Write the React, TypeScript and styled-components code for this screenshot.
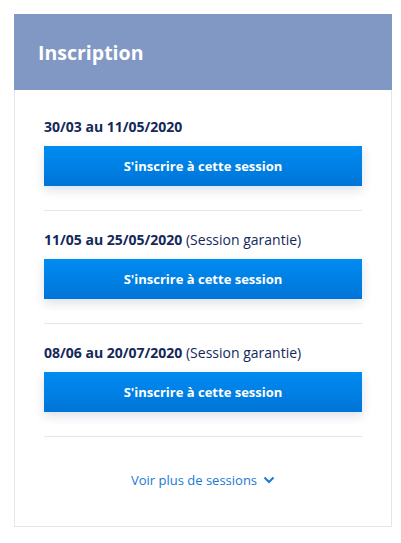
import React from 'react';
import styled, {createGlobalStyle} from 'styled-components';

const GlobalStyle = createGlobalStyle`
  body {
    margin: 0;
    background: #fff;
    font-family: "Open Sans", Lato, sans-serif;
  }
`;

const Page = styled.div`
  padding: 14px;
`;

const Card = styled.section`
  width: 378px;
  box-sizing: border-box;
`;

const Header = styled.header`
  height: 76px;
  background: #8198c4;
  display: flex;
  align-items: center;
  padding-left: 24px;
`;

const Title = styled.h2`
  margin: 0;
  color: #fff;
  font-size: 19.5px;
  font-weight: 700;
`;

const Body = styled.div`
  border: 1px solid #e3e7ea;
  border-top: none;
  padding: 8px 29px 0;
`;

const Session = styled.div`
  padding: 19px 0 24px;
  border-bottom: 1px solid #e3e7ea;
  display: flex;
  flex-direction: column;
  gap: 9px;
`;

const Dates = styled.div`
  font-size: 14px;
  line-height: 20px;
  color: #15285a;
  font-weight: 700;
`;

const Note = styled.span`
  font-weight: 400;
`;

const Button = styled.button`
  height: 40px;
  border: none;
  background: linear-gradient(to bottom, #008cf2, #0074d7);
  color: #fff;
  font-family: inherit;
  font-size: 13px;
  font-weight: 700;
  box-shadow: 0 4px 10px rgba(0, 40, 90, 0.15);
  cursor: pointer;
`;

const Footer = styled.div`
  padding: 33px 0 36px;
  display: flex;
  justify-content: center;
`;

const MoreLink = styled.a`
  display: flex;
  align-items: center;
  gap: 6px;
  font-size: 13px;
  line-height: 20px;
  color: #1a78d6;
  text-decoration: none;
  cursor: pointer;
`;

const sessions = [
	{dates: '30/03 au 11/05/2020', note: ''},
	{dates: '11/05 au 25/05/2020', note: '(Session garantie)'},
	{dates: '08/06 au 20/07/2020', note: '(Session garantie)'},
];

const App: React.FC = () => (
	<>
		<GlobalStyle/>
		<Page>
			<Card>
				<Header>
					<Title>Inscription</Title>
				</Header>
				<Body>
					{sessions.map(s => (
						<Session key={s.dates}>
							<Dates>
								{s.dates}
								{s.note && <Note> {s.note}</Note>}
							</Dates>
							<Button>S'inscrire à cette session</Button>
						</Session>
					))}
					<Footer>
						<MoreLink>
							Voir plus de sessions
							<svg width="12" height="8" viewBox="0 0 12 8" fill="none">
								<path d="M1.5 1.5 6 6l4.5-4.5" stroke="#1a78d6" strokeWidth="2"/>
							</svg>
						</MoreLink>
					</Footer>
				</Body>
			</Card>
		</Page>
	</>
);

export default App;
